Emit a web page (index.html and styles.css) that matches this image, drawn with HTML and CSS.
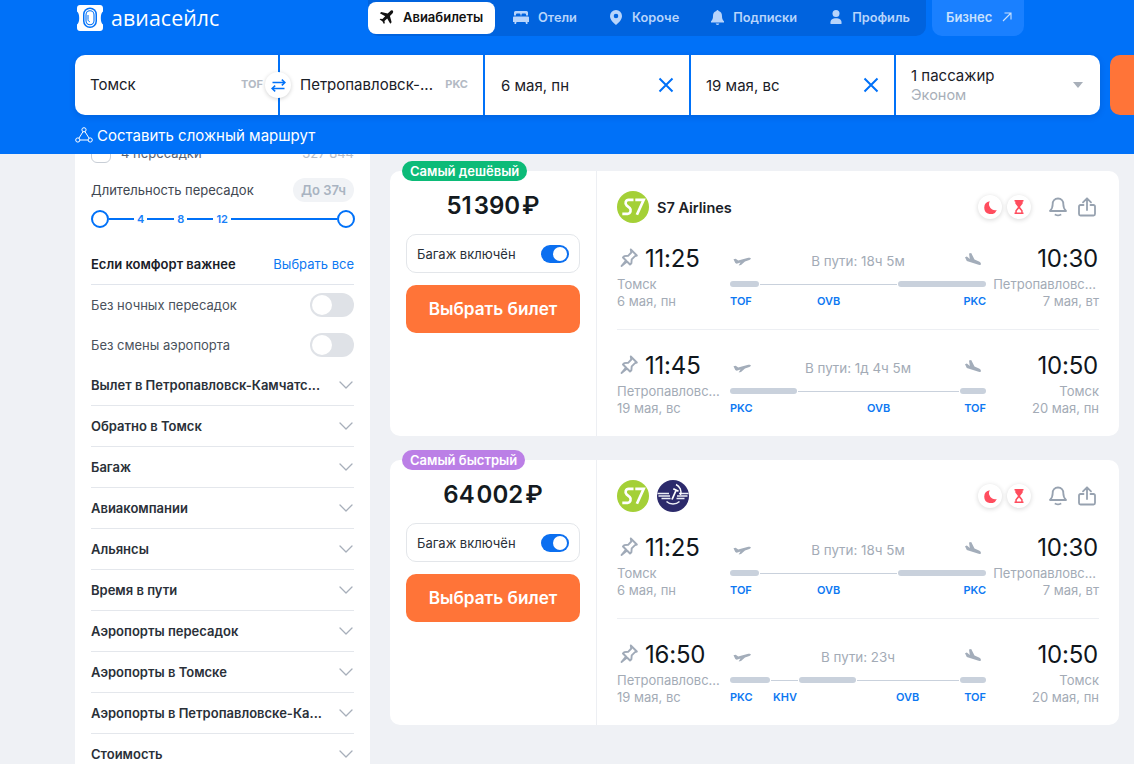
FILE: index.html
```html
<!DOCTYPE html>
<html lang="ru">
<head>
<meta charset="utf-8">
<title>Авиасейлс</title>
<link rel="stylesheet" href="styles.css">
</head>
<body>
<svg class="defs" width="0" height="0" aria-hidden="true">
  <defs>
    <symbol id="takeoff" viewBox="0 0 18 10"><path d="M.5 2.200 2.700 1.800 5.200 3.600 14.400 1C16 .6 17.600.7 17.800 1.400c.1.700-1.100 1.400-2.200 1.800l-3.600 1.300-4 3.600-2.300.5 1.800-3.100-3.800 1.200-1.400-.6z"/></symbol>
    <symbol id="landing" viewBox="0 0 16 14"><path d="M0 4.200 1.900 3.600 4.800 6 4 .4 6.200 0 9.500 6.500 14 8.500c1.500.7 2.200 1.900 1.800 2.900-.4.900-1.800.7-3 .2L1.800 7.900z"/></symbol>
    <symbol id="pin" viewBox="0 0 18 19"><path d="M10.800 1.500 16.800 7.500 15 8.100 11.700 11.400 11.400 15.200 10 16.500 7 13.500 1.500 18 6 12.500 3 9.500 4.300 8.100 8.100 7.800 11.300 4.500z" fill="none" stroke="currentColor" stroke-width="1.900" stroke-linejoin="round"/></symbol>
    <symbol id="moon" viewBox="0 0 13 13"><path d="M5.800.2A6.500 6.500 0 1 0 12.800 9 5.800 5.800 0 0 1 8.200 8.500 6 6 0 0 1 5.800.2z"/></symbol>
    <symbol id="hourglass" viewBox="0 0 10 14"><path fill-rule="evenodd" d="M.5 0h9v1.500H8.700V3.500L6 7l2.700 3.500v2h.8V14h-9v-1.500h.8v-2L4 7 1.300 3.500v-2H.5zM5 8.500 2.800 11v1.500h4.400V11z"/></symbol>
    <symbol id="bell" viewBox="0 0 18 20"><path d="M9 1.500c-3.400 0-5.300 2.500-5.300 5.500 0 3.500-.9 5.300-2.700 7h16c-1.800-1.700-2.700-3.500-2.700-7 0-3-1.900-5.500-5.300-5.500zM6.500 17.800c1.500.8 3.500.8 5 0" fill="none" stroke="currentColor" stroke-width="1.800" stroke-linecap="round" stroke-linejoin="round"/></symbol>
    <symbol id="share" viewBox="0 0 18 20"><path d="M9 13V1.500M5 5.300 9 1.300l4 4M5.500 8H2.500a1.500 1.500 0 0 0-1.500 1.500v7.500a1.500 1.500 0 0 0 1.500 1.500h13a1.500 1.500 0 0 0 1.500-1.500V9.500A1.500 1.500 0 0 0 15.500 8h-3" fill="none" stroke="currentColor" stroke-width="1.800" stroke-linecap="round" stroke-linejoin="round"/></symbol>
    <symbol id="chev" viewBox="0 0 14 8"><path d="M1 1l6 6 6-6" fill="none" stroke="currentColor" stroke-width="1.300" stroke-linecap="round" stroke-linejoin="round"/></symbol>
    <symbol id="cross" viewBox="0 0 16 16"><path d="M1.500 1.500l13 13M14.500 1.500l-13 13" fill="none" stroke="currentColor" stroke-width="2"/></symbol>
    <symbol id="s7" viewBox="0 0 32 32"><circle cx="16" cy="16" r="16" fill="#a4d037"/><path d="M16.500 8.800H11.500C8.800 8.800 7.500 12.300 9.700 14.500L12.700 17C14.800 19 13.300 22.800 10.700 22.800H5.300M18.300 8.800H26.700L19.900 23.800" fill="none" stroke="#fff" stroke-width="2.700"/></symbol>
    <symbol id="aeroflot" viewBox="0 0 32 32"><circle cx="16" cy="16" r="16" fill="#2c2a6b"/><path d="M.5 13.500H12M1.500 16H13M4.500 18.500H13.500M19.500 18.500H27.500M20 16H30.500M22 13.500H31.500M9.500 21.500C13 24.800 19 24.800 22.500 21.500" fill="none" stroke="#eceef6" stroke-width="1.500"/><path d="M19 4.500A8.500 8.500 0 0 1 23.500 15" fill="none" stroke="#fff" stroke-width="1.400"/><path d="M15 19.500 19 10.500M16.300 8.800 21.500 11.300" fill="none" stroke="#fff" stroke-width="1.800"/></symbol>
  </defs>
</svg>

<header class="topbar">
  <div class="topline">
    <a class="logo">
      <svg class="logo-mark" viewBox="0 0 26 26"><path d="M3 0h20c1.700 0 3 1.300 3 3v3.500c-1.500.8-2.200 3.500-2.200 6.500s.7 5.700 2.200 6.500V23c0 1.700-1.300 3-3 3H3c-1.700 0-3-1.300-3-3v-3.500C1.500 18.700 2.200 16 2.200 13S1.500 7.300 0 6.500V3C0 1.300 1.300 0 3 0z" fill="#fff"/><rect x="6" y="2.500" width="14" height="20.500" rx="7" fill="#0071f8"/><rect x="7.500" y="4" width="11" height="17.500" rx="5.500" fill="#fff"/><rect x="9" y="5.800" width="8" height="14" rx="4" fill="none" stroke="#0071f8" stroke-width="1.100"/><path d="M11 10v4.500c0 1.200.7 2 1.800 2.200" fill="none" stroke="#0071f8" stroke-width="1"/></svg>
      <span class="logo-text">авиасейлс</span>
    </a>
    <nav class="nav">
      <a class="nav-item active">
        <svg class="nav-ico" width="15" height="15" viewBox="0 0 17 17"><path d="M15.600.8c-.8-.7-2.100-.4-3 .5L9.800 4.100 2.500 2.200 1 3.700l6 3.500-3.100 3.100-2.200-.4-1 1 3.100 1.800 1.800 3.100 1-1-.4-2.200 3.100-3.100 3.500 6 1.500-1.500-1.900-7.300 2.800-2.800c.9-.9 1.200-2.200.4-3z" fill="#111"/></svg>
        <span>Авиабилеты</span>
      </a>
      <a class="nav-item">
        <svg class="nav-ico" width="16" height="13" viewBox="0 0 16 13"><path d="M2.500 0h11A1.500 1.500 0 0 1 15 1.500V4.500h-2V3.500a1 1 0 0 0-1-1H9.500a1 1 0 0 0-1 1v1h-1v-1a1 1 0 0 0-1-1H4a1 1 0 0 0-1 1v1H1V1.500A1.500 1.500 0 0 1 2.500 0zM1 5.500h14A1 1 0 0 1 16 6.500V11h-1.500v2H13l-.5-2h-9L3 13H1.500v-2H0V6.500a1 1 0 0 1 1-1z" fill="currentColor"/></svg>
        <span>Отели</span>
      </a>
      <a class="nav-item">
        <svg class="nav-ico" width="14" height="15" viewBox="-1 0 14 15"><path d="M6 0a6 6 0 0 1 6 6c0 3.500-3 6.500-6 9-3-2.500-6-5.500-6-9a6 6 0 0 1 6-6zm0 3.700a2.300 2.300 0 1 0 0 4.600 2.300 2.300 0 0 0 0-4.600z" fill="currentColor" fill-rule="evenodd"/></svg>
        <span>Короче</span>
      </a>
      <a class="nav-item">
        <svg class="nav-ico" width="13" height="15" viewBox="0 0 13 15"><path d="M6.500 0c.6 0 1 .4 1.100 1C10 1.500 11 3.500 11 6c0 2.500.5 4 2 5.300V12.500H0v-1.200C1.500 10 2 8.500 2 6c0-2.500 1-4.500 3.400-5C5.500.4 5.900 0 6.500 0zM4.700 13.500h3.600a1.800 1.500 0 0 1-3.600 0z" fill="currentColor"/></svg>
        <span>Подписки</span>
      </a>
      <a class="nav-item">
        <svg class="nav-ico" width="14" height="14" viewBox="0 0 14 14"><circle cx="7" cy="3.600" r="3.500" fill="currentColor"/><path d="M1.500 14v-1.800C1.500 9.800 4 8.300 7 8.300s5.500 1.500 5.500 3.900V14z" fill="currentColor"/></svg>
        <span>Профиль</span>
      </a>
    </nav>
    <a class="biz">Бизнес
      <svg width="10" height="10" viewBox="0 0 10 10"><path d="M1 9 9 1M2.500 1H9v6.500" fill="none" stroke="currentColor" stroke-width="1.100"/></svg>
    </a>
  </div>

  <form class="search">
    <div class="fields">
      <div class="field f-from"><span class="val">Томск</span><span class="iata">TOF</span>
        <span class="swap"><svg width="15" height="13" viewBox="0 0 15 13"><path d="M14 3.500H1.500M10.800.6 14 3.500l-3.200 2.900M1 9.500h12.500M4.200 6.600 1 9.500l3.200 2.900" fill="none" stroke="#0071f8" stroke-width="1.500"/></svg></span>
      </div>
      <div class="field f-to"><span class="val">Петропавловск-...</span><span class="iata">PKC</span></div>
      <div class="field f-date"><span class="val">6 мая, пн</span><svg class="x" width="16" height="16"><use href="#cross"/></svg></div>
      <div class="field f-date"><span class="val">19 мая, вс</span><svg class="x" width="16" height="16"><use href="#cross"/></svg></div>
      <div class="field f-pax"><div class="pax-text"><span class="val">1 пассажир</span><span class="cabin">Эконом</span></div><i class="caret"></i></div>
    </div>
    <div class="go"></div>
  </form>

  <a class="multi">
    <svg width="18" height="16" viewBox="0 0 18 16"><g fill="none" stroke="#fff" stroke-width="1"><circle cx="9" cy="2.800" r="2.100"/><circle cx="2.800" cy="13" r="2.100"/><circle cx="15.200" cy="13" r="2.100"/><path d="M8 4.700 3.900 11.200M10 4.700l4.100 6.500M4.900 13h8.200"/></g></svg>
    <span>Составить сложный маршрут</span>
  </a>
</header>

<main class="page">
  <aside class="filters">
    <div class="f-check"><i class="box"></i><span>4 пересадки</span><em>327 844</em></div>

    <div class="dur-head"><span>Длительность пересадок</span><b class="dur-pill">До 37ч</b></div>
    <div class="slider">
      <i class="knob"></i><i class="track t1"></i><b>4</b><i class="track t2"></i><b>8</b><i class="track t4"></i><b>12</b><i class="track t3"></i><i class="knob"></i>
    </div>

    <div class="comfort-head"><strong>Если комфорт важнее</strong><a>Выбрать все</a></div>
    <div class="opt"><span>Без ночных пересадок</span><i class="sw"></i></div>
    <div class="opt"><span>Без смены аэропорта</span><i class="sw"></i></div>

    <ul class="acc">
      <li><span>Вылет в Петропавловск-Камчатс...</span><svg width="14" height="8"><use href="#chev"/></svg></li>
      <li><span>Обратно в Томск</span><svg width="14" height="8"><use href="#chev"/></svg></li>
      <li><span>Багаж</span><svg width="14" height="8"><use href="#chev"/></svg></li>
      <li><span>Авиакомпании</span><svg width="14" height="8"><use href="#chev"/></svg></li>
      <li><span>Альянсы</span><svg width="14" height="8"><use href="#chev"/></svg></li>
      <li><span>Время в пути</span><svg width="14" height="8"><use href="#chev"/></svg></li>
      <li><span>Аэропорты пересадок</span><svg width="14" height="8"><use href="#chev"/></svg></li>
      <li><span>Аэропорты в Томске</span><svg width="14" height="8"><use href="#chev"/></svg></li>
      <li><span>Аэропорты в Петропавловске-Ка...</span><svg width="14" height="8"><use href="#chev"/></svg></li>
      <li><span>Стоимость</span><svg width="14" height="8"><use href="#chev"/></svg></li>
    </ul>
  </aside>

  <section class="results">
    <article class="ticket">
      <span class="badge green">Самый дешёвый</span>
      <div class="buy">
        <div class="price">51&#8202;390&#8202;₽</div>
        <div class="bag"><span>Багаж включён</span><i class="sw on"></i></div>
        <button class="pick" type="button">Выбрать билет</button>
      </div>
      <div class="info">
        <div class="info-head">
          <svg class="al" width="32" height="32"><use href="#s7"/></svg>
          <span class="al-name">S7 Airlines</span>
          <div class="tools">
            <span class="mark"><svg width="13" height="13" fill="#ff4d5e"><use href="#moon"/></svg></span>
            <span class="mark"><svg width="10" height="14" fill="#ff4d5e"><use href="#hourglass"/></svg></span>
            <svg class="tool t-bell" width="18" height="20"><use href="#bell"/></svg>
            <svg class="tool" width="18" height="20"><use href="#share"/></svg>
          </div>
        </div>
        <div class="seg">
          <div class="end"><div class="time"><svg class="pin" width="18" height="19"><use href="#pin"/></svg>11:25</div><div class="city">Томск</div><div class="date">6 мая, пн</div></div>
          <div class="route">
            <div class="route-top"><svg class="pl" width="18" height="10"><use href="#takeoff"/></svg><span class="dur">В пути: 18ч 5м</span><svg class="pl land" width="16" height="14"><use href="#landing"/></svg></div>
            <div class="line"><i class="leg" style="width:29px"></i><i class="lay"></i><i class="leg" style="width:88px"></i></div>
            <div class="codes"><span style="width:87px">TOF</span><span>OVB</span><span class="last">PKC</span></div>
          </div>
          <div class="end right"><div class="time">10:30</div><div class="city trunc">Петропавловс...</div><div class="date">7 мая, вт</div></div>
        </div>
        <div class="seg">
          <div class="end"><div class="time"><svg class="pin" width="18" height="19"><use href="#pin"/></svg>11:45</div><div class="city">Петропавловс...</div><div class="date">19 мая, вс</div></div>
          <div class="route">
            <div class="route-top"><svg class="pl" width="18" height="10"><use href="#takeoff"/></svg><span class="dur">В пути: 1д 4ч 5м</span><svg class="pl land" width="16" height="14"><use href="#landing"/></svg></div>
            <div class="line"><i class="leg" style="width:67px"></i><i class="lay"></i><i class="leg" style="width:26px"></i></div>
            <div class="codes"><span style="width:137px">PKC</span><span>OVB</span><span class="last">TOF</span></div>
          </div>
          <div class="end right"><div class="time">10:50</div><div class="city">Томск</div><div class="date">20 мая, пн</div></div>
        </div>
      </div>
    </article>

    <article class="ticket">
      <span class="badge violet">Самый быстрый</span>
      <div class="buy">
        <div class="price">64&#8202;002&#8202;₽</div>
        <div class="bag"><span>Багаж включён</span><i class="sw on"></i></div>
        <button class="pick" type="button">Выбрать билет</button>
      </div>
      <div class="info">
        <div class="info-head">
          <svg class="al" width="32" height="32"><use href="#s7"/></svg>
          <svg class="al al2" width="32" height="32"><use href="#aeroflot"/></svg>
          <div class="tools">
            <span class="mark"><svg width="13" height="13" fill="#ff4d5e"><use href="#moon"/></svg></span>
            <span class="mark"><svg width="10" height="14" fill="#ff4d5e"><use href="#hourglass"/></svg></span>
            <svg class="tool t-bell" width="18" height="20"><use href="#bell"/></svg>
            <svg class="tool" width="18" height="20"><use href="#share"/></svg>
          </div>
        </div>
        <div class="seg">
          <div class="end"><div class="time"><svg class="pin" width="18" height="19"><use href="#pin"/></svg>11:25</div><div class="city">Томск</div><div class="date">6 мая, пн</div></div>
          <div class="route">
            <div class="route-top"><svg class="pl" width="18" height="10"><use href="#takeoff"/></svg><span class="dur">В пути: 18ч 5м</span><svg class="pl land" width="16" height="14"><use href="#landing"/></svg></div>
            <div class="line"><i class="leg" style="width:29px"></i><i class="lay"></i><i class="leg" style="width:88px"></i></div>
            <div class="codes"><span style="width:87px">TOF</span><span>OVB</span><span class="last">PKC</span></div>
          </div>
          <div class="end right"><div class="time">10:30</div><div class="city trunc">Петропавловс...</div><div class="date">7 мая, вт</div></div>
        </div>
        <div class="seg">
          <div class="end"><div class="time"><svg class="pin" width="18" height="19"><use href="#pin"/></svg>16:50</div><div class="city">Петропавловс...</div><div class="date">19 мая, вс</div></div>
          <div class="route">
            <div class="route-top"><svg class="pl" width="18" height="10"><use href="#takeoff"/></svg><span class="dur">В пути: 23ч</span><svg class="pl land" width="16" height="14"><use href="#landing"/></svg></div>
            <div class="line"><i class="leg" style="width:40px"></i><i class="lay" style="flex:0 0 27px"></i><i class="leg" style="width:57px"></i><i class="lay"></i><i class="leg" style="width:26px"></i></div>
            <div class="codes"><span style="width:43px">PKC</span><span style="width:123px">KHV</span><span>OVB</span><span class="last">TOF</span></div>
          </div>
          <div class="end right"><div class="time">10:50</div><div class="city">Томск</div><div class="date">20 мая, пн</div></div>
        </div>
      </div>
    </article>
  </section>
</main>
</body>
</html>
```
FILE: styles.css
```css
* { box-sizing: border-box; }
html, body { margin: 0; height: 764px; overflow: hidden; }
body { background: #eff1f5; font-family: Inter, "Noto Sans", sans-serif; color: #1a2027; font-size: 13px; }
i, em { font-style: normal; display: block; }
a { text-decoration: none; color: inherit; }
.defs { position: absolute; }

.topbar { position: relative; z-index: 2; height: 154px; background: #0071f8; padding-left: 75px; overflow: hidden; }
.topline { display: flex; height: 55px; align-items: flex-start; }
.logo { display: flex; align-items: center; width: 293px; height: 36px; padding-left: 2px; color: #fff; }
.logo-mark { width: 26px; height: 26px; }
.logo-text { margin-left: 8px; font-size: 21.300px; font-family: "Open Sans", sans-serif; letter-spacing: .1px; margin-top: -2px; }
.nav { display: flex; height: 36px; background: #0063de; border-radius: 0 0 10px 10px; }
.nav-item { display: flex; align-items: center; gap: 9px; padding: 0 16px 2px; height: 32px; margin-top: 2px; color: #b7d4fb; font-weight: 600; font-size: 12.800px; }
.nav-item.active { width: 127px; padding: 0 0 2px 11px; gap: 9px; margin-right: 2px; background: #fff; color: #111; border-radius: 8px; font-size: 13px; }
.biz { display: flex; align-items: center; gap: 10px; margin-left: 6px; height: 36px; width: 92px; padding: 0 0 2px 14px; background: #1a80ff; border-radius: 0 0 10px 10px; color: #c9e0fd; font-weight: 600; font-size: 13px; }

.search { display: flex; gap: 10px; }
.fields { display: flex; gap: 2px; width: 1025px; height: 60px; flex: none; box-shadow: 0 2px 6px rgba(0, 40, 110, .18); border-radius: 10px; }
.field { background: #fff; flex: 0 0 203px; display: flex; align-items: center; padding: 0 15px; position: relative; font-size: 15px; }
.f-from { border-radius: 10px 0 0 10px; padding-bottom: 2px; }
.f-to { padding: 0 15px 2px 20px; }
.f-date { flex-basis: 204px; padding: 0 10px 0 16px; }
.f-date + .f-date { flex-basis: 203px; padding-left: 15px; }
.f-pax { flex: 1; border-radius: 0 10px 10px 0; justify-content: space-between; }
.iata { margin-left: auto; font-size: 11px; font-weight: 700; color: #b3bac4; }
.swap { position: absolute; right: -13px; top: 17px; width: 26px; height: 26px; border-radius: 50%; background: #fff; box-shadow: 0 1px 4px rgba(0, 0, 0, .18); display: flex; align-items: center; justify-content: center; z-index: 1; }
.x { margin-left: auto; color: #0071f8; margin-right: 5px; }
.pax-text { display: flex; flex-direction: column; line-height: 19px; }
.cabin { color: #a8afb9; font-size: 14.500px; }
.caret { width: 0; height: 0; border: 5.500px solid transparent; border-top: 6px solid #a8afb9; border-bottom: 0; margin-right: 2px; }
.go { width: 60px; height: 60px; background: #ff7438; border-radius: 10px; flex: none; }
.multi { display: inline-flex; align-items: center; gap: 4px; margin-top: 12px; color: #fff; font-size: 15px; height: 16px; }

.page { display: flex; padding-left: 75px; gap: 20px; }
.filters { width: 295px; flex: none; background: #fff; padding: 0 16px; margin-top: -16px; height: 640px; }
.f-check { display: flex; align-items: center; height: 24px; margin-top: 3px; gap: 10px; color: #5a6472; white-space: nowrap; }
.box { width: 20px; height: 20px; border: 1px solid #c8ced6; border-radius: 6px; }
.f-check em { margin-left: auto; color: #b7bec8; }
.dur-head { display: flex; justify-content: space-between; align-items: center; margin-top: 13px; height: 24px; color: #3f4751; }
.dur-pill { background: #f1f3f6; color: #a9b3c1; border-radius: 12px; height: 24px; line-height: 24px; width: 61px; text-align: center; font-weight: 600; font-size: 13px; white-space: nowrap; }
.slider { display: flex; align-items: center; margin: 8px -1px 0 0; height: 18px; color: #1a80f8; font-size: 11px; }
.slider b { font-weight: 600; padding: 0 3px; }
.knob { width: 18px; height: 18px; border: 2px solid #0071f8; border-radius: 50%; background: #fff; flex: none; }
.track { height: 2px; background: #0071f8; }
.t1 { flex: 0 0 25px; } .t2 { flex: 0 0 27px; } .t4 { flex: 0 0 26px; } .t3 { flex: 1; }
.comfort-head { display: flex; justify-content: space-between; margin-top: 29px; height: 28px; border-bottom: 1px solid #e1e5ec; line-height: 14px; }
.comfort-head strong { font-weight: 600; font-size: 13px; }
.comfort-head a { color: #0d78f2; }
.opt { display: flex; justify-content: space-between; align-items: center; height: 24px; margin-top: 8px; color: #4a525c; }
.opt + .opt { margin-top: 16px; }
.sw { width: 44px; height: 24px; border-radius: 12px; background: #dfe2e7; position: relative; flex: none; }
.sw::after { content: ""; position: absolute; left: 2px; top: 2px; width: 20px; height: 20px; background: #fff; border-radius: 50%; }
.sw.on { width: 28px; height: 18px; background: #0b6ff0; }
.sw.on::after { left: auto; right: 2px; width: 14px; height: 14px; }
.acc { list-style: none; margin: 8px 0 0; padding: 0; }
.acc li { height: 41px; display: flex; align-items: center; justify-content: space-between; border-bottom: 1px solid #e4e7ec; font-weight: 600; font-size: 13px; color: #2a3038; padding-right: 1px; }
.acc svg { color: #a7afba; flex: none; }

.results { width: 729px; flex: none; padding-top: 17px; display: flex; flex-direction: column; gap: 24px; }
.ticket { position: relative; display: flex; background: #fff; border-radius: 10px; height: 265px; }
.badge { position: absolute; left: 12px; top: -10px; height: 20px; padding: 0 8px; border-radius: 10px; color: #fff; font-weight: 600; font-size: 13px; line-height: 20px; }
.badge.green { background: #0cbb78; }
.badge.violet { background: #bb7fe6; }
.buy { width: 207px; flex: none; border-right: 1px solid #edeff3; padding: 0 16px; display: flex; flex-direction: column; }
.price { text-align: center; font-size: 24px; font-weight: 600; line-height: 30px; margin-top: 20px; color: #141a20; }
.bag { display: flex; justify-content: space-between; align-items: center; height: 39px; margin-top: 13px; padding: 0 10px; border: 1px solid #e3e6ea; border-radius: 10px; color: #2a3038; }
.pick { height: 48px; margin-top: 12px; padding: 0 0 2px; border: 0; border-radius: 10px; background: #ff7438; color: #fff; font: 600 17.200px Inter, sans-serif; }
.info { flex: 1; padding: 20px 20px 0; }
.info-head { display: flex; align-items: center; height: 32px; margin-bottom: 20px; }
.al-name { margin-left: 8px; font-weight: 600; font-size: 14.500px; }
.al2 { margin-left: 8px; }
.tools { margin-left: auto; margin-right: 3px; display: flex; align-items: center; gap: 5px; }
.mark { width: 24px; height: 24px; border-radius: 50%; background: #fff; box-shadow: 0 1px 5px rgba(0, 0, 0, .16); display: flex; align-items: center; justify-content: center; }
.tool { color: #97a2b0; margin-left: 6px; }
.t-bell { margin-left: 13px; }
.seg { display: grid; grid-template-columns: 113px 256px 113px; height: 87px; border-bottom: 1px solid #edeff3; margin-bottom: 20px; }
.seg:last-child { border-bottom: 0; margin-bottom: 0; }
.end { min-width: 0; }
.time { display: flex; align-items: center; gap: 7px; height: 30px; font-size: 24px; letter-spacing: -.2px; color: #10161c; padding: 0 1px 0 3px; }
.right .time { justify-content: flex-end; }
.pin { color: #a0aab8; flex: none; margin-top: -2px; }
.city, .date { color: #a3abb6; line-height: 17px; white-space: nowrap; }
.city { margin-top: 3px; }
.trunc { margin-right: 3px; }
.right { text-align: right; }
.route { display: flex; flex-direction: column; }
.route-top { display: flex; align-items: center; justify-content: space-between; height: 24px; margin-top: 6px; padding: 0 5px 0 3px; }
.pl { fill: #a3adba; margin-top: 1px; }
.pl.land { margin-top: -3px; }
.dur { color: #a3abb6; font-size: 13.400px; }
.line { display: flex; align-items: center; height: 6px; margin-top: 8px; }
.leg { height: 6px; border-radius: 3px; background: #c9d1dc; flex: none; }
.lay { flex: 1; height: 1px; background: #c9d1dc; margin: 0 1px; }
.codes { display: flex; margin-top: 7px; color: #0d78f2; font-weight: 600; font-size: 11px; line-height: 14px; }
.codes span { flex: none; }
.codes .last { margin-left: auto; }
```
